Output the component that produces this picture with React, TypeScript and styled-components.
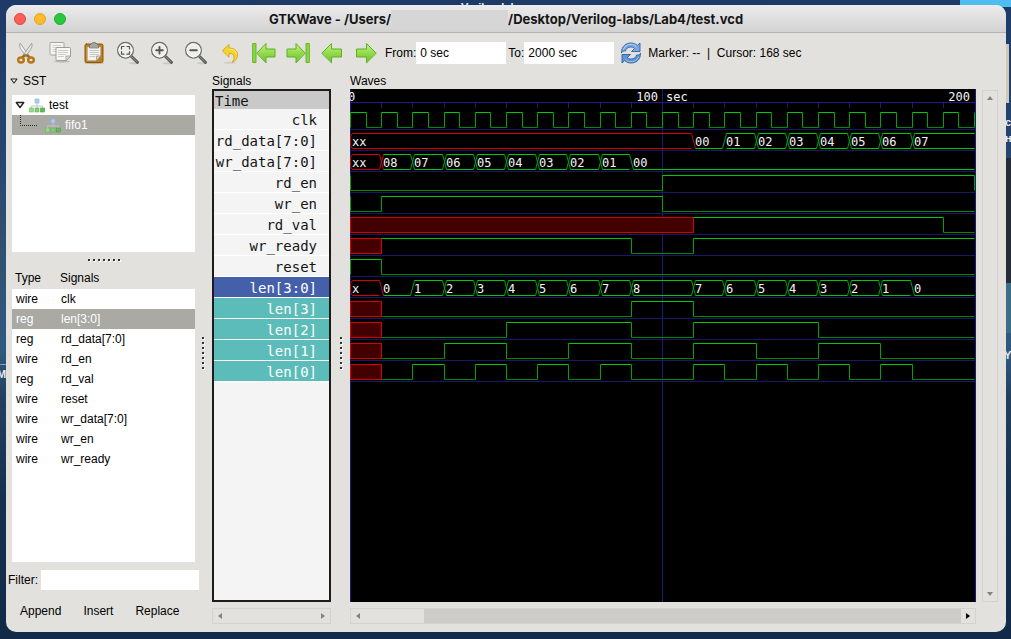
import React from "react";
import styled, { createGlobalStyle } from "styled-components";

const chrome = "#e2e1dd";
const selection = "#aaa9a4";
const ui = `"Liberation Sans", Arial, sans-serif`;
const mono = `"DejaVu Sans Mono", "Liberation Mono", monospace`;

const Global = createGlobalStyle`
  * { box-sizing: border-box; }
  html, body { margin: 0; padding: 0; }
  body { font: 12px/16px ${ui}; color: #000; }
  button, input { font: inherit; color: inherit; border: 0; padding: 0; margin: 0; background: none; }
`;

/* ---------- desktop ---------- */

const Desktop = styled.div`
  position: relative;
  display: flex;
  min-height: 100vh;
  padding: 5px 5px 7px 6px;
  overflow: hidden;
  background: linear-gradient(180deg, #1e3a66 0%, #24446f 22%, #31506f 38%, #2f5a80 55%, #23405f 62%, #16304f 78%, #122a47 100%);
`;

const Patch = styled.div<{ $x: string; $y: number; $w: number; $h: number; $c: string }>`
  position: absolute;
  ${(p) => p.$x};
  top: ${(p) => p.$y}px;
  width: ${(p) => p.$w}px;
  height: ${(p) => p.$h}px;
  background: ${(p) => p.$c};
`;

const DesktopLabel = styled.span<{ $x: string; $y: number }>`
  position: absolute;
  ${(p) => p.$x};
  top: ${(p) => p.$y}px;
  font-weight: bold;
  font-size: 11px;
  line-height: 12px;
  color: #e8eef6;
  white-space: nowrap;
`;

/* ---------- window ---------- */

const Window = styled.main`
  position: relative;
  z-index: 1;
  flex: 1;
  min-width: 0;
  display: flex;
  flex-direction: column;
  background: ${chrome};
  border-radius: 10px;
  overflow: hidden;
`;

const TitleBar = styled.header`
  position: relative;
  display: flex;
  align-items: center;
  justify-content: center;
  height: 28px;
  border-bottom: 1px solid #b4b3b1;
  background: linear-gradient(#ececec, #d3d2d2);
`;

const Lights = styled.div`
  position: absolute;
  left: 8px;
  top: 8px;
  display: flex;
  gap: 8px;
`;

const Light = styled.button<{ $c: string; $e: string }>`
  width: 12px;
  height: 12px;
  border-radius: 50%;
  background: ${(p) => p.$c};
  border: 1px solid ${(p) => p.$e};
`;

const Title = styled.h1`
  margin: 0;
  display: flex;
  align-items: center;
  font: 700 13px/18px Inter, sans-serif;
  color: #161616;
  white-space: pre;
`;

const Redacted = styled.span`
  width: 117px;
  height: 18px;
  background: #d6d6d6;
`;

const Toolbar = styled.div`
  display: flex;
  align-items: center;
  height: 40px;
  padding-left: 3px;
  white-space: pre;
`;

const ToolButton = styled.button`
  flex: none;
  display: flex;
  align-items: center;
  justify-content: center;
  width: 34px;
  height: 34px;
`;

const TimeLabel = styled.label`
  display: flex;
  align-items: center;
  padding-left: 2px;
`;

const TimeInput = styled.input`
  width: 90px;
  height: 22px;
  padding: 0 4px;
  background: #fff;
`;

const Body = styled.div`
  flex: 1;
  display: flex;
  min-height: 0;
`;

const Column = styled.section<{ $w?: number }>`
  display: flex;
  flex-direction: column;
  min-width: 0;
  ${(p) => (p.$w ? `flex: none; width: ${p.$w}px;` : "flex: 1;")}
`;

const Caption = styled.h2`
  margin: 0;
  height: 16px;
  font: 12px/16px ${ui};
`;

/* ---------- SST column ---------- */

const Expander = styled.button`
  display: flex;
  align-items: center;
  gap: 5px;
  height: 16px;
  margin: 0 0 6px 4px;
`;

const Tree = styled.ul`
  height: 157px;
  margin: 0 6px;
  padding: 0;
  list-style: none;
  background: #fff;
`;

const TreeItem = styled.li<{ $on?: boolean }>`
  display: flex;
  align-items: center;
  gap: 4px;
  height: 20px;
  padding-left: 3px;
  background: ${(p) => (p.$on ? selection : "transparent")};
  color: ${(p) => (p.$on ? "#fff" : "inherit")};
`;

const Grip = styled.div<{ $vertical?: boolean; $size: number; $start?: boolean }>`
  flex: none;
  display: flex;
  align-items: center;
  justify-content: ${(p) => (p.$start ? "flex-start" : "center")};
  ${(p) => (p.$vertical ? "width" : "height")}: ${(p) => p.$size}px;
`;

const ListBox = styled.div`
  flex: 1;
  margin: 0 6px 8px;
  background: #fff;
`;

const SignalTable = styled.table`
  width: 100%;
  border-collapse: collapse;
  table-layout: fixed;

  th, td {
    height: 20px;
    padding: 0 0 0 4px;
    font-weight: normal;
    text-align: left;
    vertical-align: middle;
  }
  th {
    height: 21px;
    padding: 0 0 2px 3px;
    background: ${chrome};
  }
  th:first-child { width: 45px; }
`;

const SignalRow = styled.tr<{ $on?: boolean }>`
  background: ${(p) => (p.$on ? selection : "transparent")};
  color: ${(p) => (p.$on ? "#fff" : "inherit")};
`;

const FilterRow = styled.label`
  display: flex;
  align-items: center;
  gap: 3px;
  height: 20px;
  padding: 0 2px;
`;

const FilterInput = styled.input`
  flex: 1;
  min-width: 0;
  height: 20px;
  padding: 0 4px;
  background: #fff;
`;

const Actions = styled.div`
  display: flex;
  height: 42px;
  padding-left: 3px;
`;

const Action = styled.button`
  padding: 0 11px;
`;

/* ---------- names and waves ---------- */

const Names = styled.ol`
  flex: 1;
  margin: 0;
  padding: 0;
  list-style: none;
  border: 2px solid #1c1c1c;
  background: #f4f4f4;
  font: 14px/23px ${mono};
  color: #141414;
`;

const tones = {
  plain: ["transparent", "inherit"],
  picked: ["#4560aa", "#fff"],
  child: ["#5cbcb9", "#fff"],
};

const Name = styled.li<{ $tone: keyof typeof tones }>`
  height: 21px;
  padding-right: 12px;
  border-bottom: 1px solid #fff;
  text-align: right;
  white-space: nowrap;
  background: ${(p) => tones[p.$tone][0]};
  color: ${(p) => tones[p.$tone][1]};
`;

const TimeHead = styled.li`
  height: 18px;
  padding-left: 1px;
  line-height: 20px;
  background: #c9c9c9;
`;

const WaveRow = styled.div`
  flex: 1;
  display: flex;
  gap: 6px;
  padding-right: 8px;
`;

const Screen = styled.div`
  flex: 1;
  min-width: 0;
  overflow: hidden;
  background: #000;
  border-right: 1px solid #1b1b80;
`;

const Drawing = styled.svg`
  display: block;
`;

const ScrollBar = styled.div<{ $vertical?: boolean; $end?: number }>`
  flex: none;
  display: flex;
  justify-content: space-between;
  flex-direction: ${(p) => (p.$vertical ? "column" : "row")};
  ${(p) => (p.$vertical ? "width: 16px; margin-top: 1px;" : `height: 16px; margin: 6px ${p.$end ?? 0}px 8px 0;`)}
  border: 1px solid #d3d2ce;
`;

const Arrow = styled.button`
  flex: none;
  display: flex;
  align-items: center;
  justify-content: center;
  width: 14px;
  height: 14px;
`;

const Thumb = styled.div`
  flex: none;
  width: 59px;
`;

const Trough = styled.div`
  flex: 1;
  background: #cdccc8;
`;

/* ---------- small drawings ---------- */

const Dots = ({ vertical }: { vertical?: boolean }) => (
  <svg width={vertical ? 4 : 34} height={vertical ? 34 : 4}>
    {Array.from({ length: 7 }, (_, i) => {
      const p = i * 5 + 1;
      const [x, y] = vertical ? [1, p] : [p, 1];
      return (
        <g key={i}>
          <rect x={x + 1} y={y + 1} width="2" height="2" fill="#fff" />
          <rect x={x} y={y} width="2" height="2" fill="#333" />
        </g>
      );
    })}
  </svg>
);

const arrowPaths = {
  up: "M1 6 4 2 7 6Z",
  down: "M1 2 4 6 7 2Z",
  left: "M6 1 2 4 6 7Z",
  right: "M2 1 6 4 2 7Z",
};

const ArrowButton = ({ dir, dark }: { dir: keyof typeof arrowPaths; dark?: boolean }) => (
  <Arrow aria-label={`Scroll ${dir}`}>
    <svg width="8" height="8">
      <path d={arrowPaths[dir]} fill={dark ? "#000" : "#83827e"} />
    </svg>
  </Arrow>
);

const Triangle = ({ size = 8 }: { size?: number }) => (
  <svg width={size} height={size} viewBox="0 0 8 8">
    <path d="M1 2h6L4 6Z" fill="#fff" stroke="#222" strokeWidth="1.1" strokeLinejoin="round" />
  </svg>
);

const ModuleIcon = () => (
  <svg width="16" height="15" viewBox="0 0 16 15">
    <path d="M8 4v4M2.500 11V8h11v3M8 8v3" fill="none" stroke="#c4c4c4" />
    <rect x="6" y="1" width="4" height="4" fill="#a9cdf3" stroke="#86b1e2" strokeWidth=".6" />
    <rect x=".5" y="10" width="4" height="4" fill="#9bd890" stroke="#6cb963" strokeWidth=".6" />
    <rect x="6" y="10" width="4" height="4" fill="#86cf7b" stroke="#5fb056" strokeWidth=".6" />
    <rect x="11.500" y="10" width="4" height="4" fill="#64b95b" stroke="#479c40" strokeWidth=".6" />
  </svg>
);

const Branch = () => (
  <svg width="26" height="20">
    <path d="M5.500 0V10.500H22" fill="none" stroke="#2a2a2a" strokeDasharray="1 1" />
  </svg>
);

const Icon = ({ children }: { children: React.ReactNode }) => (
  <svg width="24" height="24" viewBox="0 0 24 24" fill="none" strokeLinecap="round" strokeLinejoin="round">
    {children}
  </svg>
);

const CutIcon = () => (
  <Icon>
    <path d="M6 2.500c-.8 2 0 4.200 1.200 6L12.500 16l1.800-1.500Z" fill="#f4f4f2" stroke="#9a9a96" strokeWidth=".9" />
    <path d="M17.800 2.500c.8 2 0 4.200-1.200 6L11.300 16 9.500 14.500Z" fill="#e4e4e2" stroke="#9a9a96" strokeWidth=".9" />
    <path d="M10.500 14.500 8.500 16M13.300 14.500l2 1.500" stroke="#a5690c" strokeWidth="2.600" />
    <ellipse cx="7" cy="19" rx="2.800" ry="2.500" stroke="#b87514" strokeWidth="2.400" />
    <ellipse cx="17" cy="19" rx="2.800" ry="2.500" stroke="#b87514" strokeWidth="2.400" />
    <circle cx="12" cy="13.500" r=".8" fill="#777" />
  </Icon>
);

const CopyIcon = () => (
  <Icon>
    <ellipse cx="14" cy="20.500" rx="8" ry="1.200" fill="#bdbcb8" />
    <rect x="2" y="1.500" width="14" height="12.500" rx="1" fill="#f5f5f3" stroke="#a4a4a0" />
    <path d="M5 4.500h8M5 6.500h3M5 8.500h3M5 10.500h3" stroke="#cfcfcb" />
    <path d="M9 6.500h12.500a1 1 0 0 1 1 1V15l-4.500 4.500H9a1 1 0 0 1-1-1v-11a1 1 0 0 1 1-1Z" fill="#f7f7f5" stroke="#9c9c98" />
    <path d="M10.500 9.500h9M10.500 11.500h9M10.500 13.500h7M10.500 15.500h5" stroke="#cbcbc7" />
    <path d="M22.500 15H18v4.500Z" fill="#dcdcd8" stroke="#9c9c98" strokeWidth=".8" />
  </Icon>
);

const PasteIcon = () => (
  <Icon>
    <ellipse cx="12" cy="22" rx="10" ry="1.200" fill="#b9b8b3" />
    <rect x="3" y="3" width="18" height="18.500" rx="1.500" fill="#c17d11" stroke="#8f5902" />
    <path d="M5.500 6h13v9l-4 4.500h-9Z" fill="#f2f2f0" stroke="#b9b7b2" strokeWidth=".7" />
    <path d="M8 9.500h8.500M8 11.500h8.500M8 13.500h8M8 15.500h5" stroke="#c3c3bf" strokeWidth=".9" />
    <path d="M18.500 15h-4v4.500Z" fill="#d3d3cf" stroke="#8e8e8a" strokeWidth=".7" />
    <path d="M7.500 6.500V4.500Q7.500 3.500 9 3.300 9.500 1.500 12 1.500t3 1.800q1.500.2 1.500 1.200v2Z" fill="#a5a6a0" stroke="#6c6d69" strokeWidth=".8" />
  </Icon>
);

const Magnifier = ({ children }: { children: React.ReactNode }) => (
  <Icon>
    <ellipse cx="18" cy="22.300" rx="5" ry="1" fill="#c9c8c4" />
    <path d="M15.500 15.500 21.500 21.300" stroke="#5a5c58" strokeWidth="3" />
    <path d="M15.500 15.500 21 20.800" stroke="#8c8e89" strokeWidth="1" />
    <circle cx="9.500" cy="9.300" r="7.800" fill="#eeeeec" stroke="#6f716d" strokeWidth="1.400" />
    <circle cx="9.500" cy="9.300" r="6.600" stroke="#fff" strokeWidth=".8" />
    {children}
  </Icon>
);

const UndoIcon = () => (
  <Icon>
    <ellipse cx="12" cy="21.800" rx="6" ry="1" fill="#cfcdc4" />
    <path
      d="M4.500 9.500 11 3.500V7c6 .3 8.500 3 8.500 7 0 3.500-2 6-5.500 7.200 1.700-2 2.300-3.800 2-5.500-.3-2.200-1.800-3.300-5-3.400v3.500Z"
      fill="#f6d32d"
      stroke="#d3a514"
      strokeWidth=".9"
    />
    <path d="M11.700 8.300c4.500.1 6.600 2 6.800 5" stroke="#fdf0a0" strokeWidth=".9" />
  </Icon>
);

const GreenArrow = ({ flip, stop }: { flip?: boolean; stop?: boolean }) => (
  <Icon>
    <g transform={flip ? "matrix(-1 0 0 1 24 0)" : undefined}>
      <defs>
        <linearGradient id="leaf" x1="0" y1="0" x2="0" y2="1">
          <stop offset="0" stopColor="#c2f08a" />
          <stop offset=".5" stopColor="#93dc4c" />
          <stop offset="1" stopColor="#6cc02a" />
        </linearGradient>
      </defs>
      {stop && <rect x="1" y="2.500" width="3" height="19" fill="#8ad646" stroke="#5fb020" strokeWidth=".9" />}
      <path
        d={
          stop
            ? "M5 12 14 2.500V8H23V16H14V21.500Z"
            : "M2 12 11.500 2.500V8H21.500V16H11.500V21.500Z"
        }
        fill="url(#leaf)"
        stroke="#5fb020"
      />
    </g>
  </Icon>
);

const ReloadIcon = () => (
  <Icon>
    <path
      d="M2.500 11.500C2.500 5 7 2 12 2c2.700 0 4.800 1 6.300 2.500L21 2v8.500h-8.500l3-3C14.500 6.300 13.300 6 12 6c-3 0-5 1.500-5.500 4-1.500-.3-3 .2-4 1.500Z"
      fill="#7ba7dc"
      stroke="#2f62a5"
      strokeWidth=".9"
    />
    <path d="M4.500 8.500C6 4.500 9 3.300 12 3.300c2.300 0 4 .8 5.300 2.200" stroke="#bcd5f3" strokeWidth=".9" />
    <path
      d="M21.500 12.500C21.500 19 17 22 12 22c-2.700 0-4.800-1-6.300-2.500L3 22v-8.500h8.500l-3 3c1 1.200 2.200 1.500 3.500 1.500 3 0 5-1.500 5.500-4 1.500.3 3-.2 4-1.500Z"
      fill="#5f92cf"
      stroke="#2f62a5"
      strokeWidth=".9"
    />
    <path d="M19.500 16c-1.500 3.600-4.500 4.700-7.500 4.700-2.300 0-4-.8-5.300-2.200" stroke="#a5c6ee" strokeWidth=".9" />
  </Icon>
);

const tools: [string, React.ReactNode][] = [
  ["Cut", <CutIcon />],
  ["Copy", <CopyIcon />],
  ["Paste", <PasteIcon />],
  [
    "Zoom fit",
    <Magnifier>
      <path d="M5.500 8V5.500H8M11 5.500h2.500V8M13.500 10.700v2.500H11M8 13.200H5.500v-2.500" stroke="#555753" strokeWidth="1.200" />
    </Magnifier>,
  ],
  [
    "Zoom in",
    <Magnifier>
      <path d="M9.500 6v6.600M6.200 9.300h6.600" stroke="#555753" strokeWidth="1.900" />
    </Magnifier>,
  ],
  [
    "Zoom out",
    <Magnifier>
      <path d="M6.200 9.300h6.600" stroke="#555753" strokeWidth="1.900" />
    </Magnifier>,
  ],
  ["Zoom undo", <UndoIcon />],
  ["Zoom to start", <GreenArrow stop />],
  ["Zoom to end", <GreenArrow stop flip />],
  ["Previous edge", <GreenArrow />],
  ["Next edge", <GreenArrow flip />],
];

/* ---------- trace data (one unit is ten seconds) ---------- */

type Step = [number, string];
type Trace = { name: string; tone?: keyof typeof tones; bus?: boolean; steps: Step[] };

const END = 20;

const clock: Step[] = Array.from({ length: END * 2 + 1 }, (_, i) => [i / 2, i % 2 ? "0" : "1"]);

const lenSteps: Step[] = [
  [0, "x"], [1, "0"], [2, "1"], [3, "2"], [4, "3"], [5, "4"], [6, "5"], [7, "6"], [8, "7"], [9, "8"],
  [11, "7"], [12, "6"], [13, "5"], [14, "4"], [15, "3"], [16, "2"], [17, "1"], [18, "0"],
];

const bit = (n: number): Step[] =>
  lenSteps
    .map(([t, v]): Step => [t, v === "x" ? "x" : String((Number(v) >> n) & 1)])
    .filter(([, v], i, all) => i === 0 || all[i - 1][1] !== v);

const traces: Trace[] = [
  { name: "clk", steps: clock },
  {
    name: "rd_data[7:0]",
    bus: true,
    steps: [[0, "xx"], [11, "00"], [12, "01"], [13, "02"], [14, "03"], [15, "04"], [16, "05"], [17, "06"], [18, "07"]],
  },
  {
    name: "wr_data[7:0]",
    bus: true,
    steps: [[0, "xx"], [1, "08"], [2, "07"], [3, "06"], [4, "05"], [5, "04"], [6, "03"], [7, "02"], [8, "01"], [9, "00"]],
  },
  { name: "rd_en", steps: [[0, "0"], [10, "1"], [20, "0"]] },
  { name: "wr_en", steps: [[0, "0"], [1, "1"], [10, "0"]] },
  { name: "rd_val", steps: [[0, "x"], [11, "1"], [19, "0"]] },
  { name: "wr_ready", steps: [[0, "x"], [1, "1"], [9, "0"], [11, "1"]] },
  { name: "reset", steps: [[0, "1"], [1, "0"]] },
  { name: "len[3:0]", tone: "picked", bus: true, steps: lenSteps },
  { name: "len[3]", tone: "child", steps: bit(3) },
  { name: "len[2]", tone: "child", steps: bit(2) },
  { name: "len[1]", tone: "child", steps: bit(1) },
  { name: "len[0]", tone: "child", steps: bit(0) },
];

const px = (t: number) => Math.round(t * 31.2) + 0.5;
const HIGH = "#00c800";
const LOW = "#008a00";
const EDGE = "#00a400";
const RED = "#d40000";
const GRID = "#1c1c7c";

const isX = (v: string) => v.startsWith("x");

const Wire = ({ steps, top, bottom }: { steps: Step[]; top: number; bottom: number }) => (
  <>
    {steps.map(([t, v], i) => {
      const a = px(t);
      const b = px(i + 1 < steps.length ? steps[i + 1][0] : END);
      if (v === "x")
        return <rect key={i} x={a} y={top} width={b - a} height={bottom - top} fill="#430000" stroke={RED} />;
      const y = v === "1" ? top : bottom;
      const afterX = i > 0 && steps[i - 1][1] === "x";
      return (
        <g key={i}>
          {!afterX && <path d={`M${a} ${top}V${bottom}`} stroke={EDGE} />}
          {b > a && <path d={`M${a} ${y}H${b}`} stroke={v === "1" ? HIGH : LOW} />}
        </g>
      );
    })}
  </>
);

const Bus = ({ steps, top, bottom }: { steps: Step[]; top: number; bottom: number }) => (
  <>
    {steps.map(([t, v], i) => {
      const last = i + 1 === steps.length;
      const a = px(t) + 2;
      const b = px(last ? END : steps[i + 1][0]) - (last ? 0 : 2);
      const zero = Number(v) === 0;
      const color = isX(v) ? RED : HIGH;
      const next = last ? "" : steps[i + 1][1];
      const nextTop = Number(next) === 0 ? bottom : top;
      return (
        <g key={i}>
          <path d={`M${a} ${bottom}H${b}${zero ? "" : `M${a} ${top}H${b}`}`} stroke={color} />
          {i === 0 && <path d={`M${a} ${top}L${a - 2} ${top + 3}V${bottom - 3}L${a} ${bottom}`} stroke={color} />}
          {!last && (
            <g stroke={isX(v) ? RED : EDGE}>
              {!zero && <path d={`M${b} ${top}L${b + 4} ${bottom}`} />}
              {nextTop === top && <path d={`M${b} ${bottom}L${b + 4} ${top}`} />}
            </g>
          )}
          <text x={Math.round(px(t)) + 1} y={Math.floor(bottom) - 2} fill="#f4f4f4">
            {v}
          </text>
        </g>
      );
    })}
  </>
);

const Waves = () => (
  <Drawing width="625" height="513" fill="none" fontFamily={mono} fontSize="12" role="img" aria-label="Waveforms">
    <path d={`M0 13.500H625`} stroke={GRID} />
    {Array.from({ length: END }, (_, i) => (
      <path key={i} d={`M${px(i)} 13V19`} stroke={GRID} />
    ))}
    {traces.map((_, i) => (
      <path key={i} d={`M0 ${40.5 + i * 21}H625`} stroke="#18186a" />
    ))}
    <path d={`M.5 0V513M${px(10)} 0V513`} stroke={GRID} />
    <text x="-2" y="12" fill="#f4f4f4">0</text>
    <text x="308" y="12" textAnchor="end" fill="#f4f4f4">100</text>
    <text x="316" y="12" fill="#f4f4f4">sec</text>
    <text x="620" y="12" textAnchor="end" fill="#f4f4f4">200</text>
    {traces.map((t, i) => {
      const Shape = t.bus ? Bus : Wire;
      return <Shape key={t.name} steps={t.steps} top={23.5 + i * 21} bottom={38.5 + i * 21} />;
    })}
  </Drawing>
);

const signals: [string, string][] = [
  ["wire", "clk"],
  ["reg", "len[3:0]"],
  ["reg", "rd_data[7:0]"],
  ["wire", "rd_en"],
  ["reg", "rd_val"],
  ["wire", "reset"],
  ["wire", "wr_data[7:0]"],
  ["wire", "wr_en"],
  ["wire", "wr_ready"],
];

export default function App() {
  return (
    <Desktop>
      <Global />
      <Patch $x="right: 0" $y={0} $w={51} $h={7} $c="#4fbdf0" />
      <Patch $x="right: 2px" $y={44} $w={4} $h={59} $c="#cfc9ba" />
      <Patch $x="right: 0" $y={158} $w={6} $h={125} $c="#262b38" />
      <Patch $x="right: 0" $y={283} $w={6} $h={50} $c="#3b6d86" />
      <DesktopLabel $x="left: 461px" $y={1}>Verilog-labs</DesktopLabel>
      <DesktopLabel $x="left: 1005px" $y={116}>c</DesktopLabel>
      <DesktopLabel $x="left: 1005px" $y={132}>н</DesktopLabel>
      <DesktopLabel $x="left: 1004px" $y={349}>Y</DesktopLabel>
      <DesktopLabel $x="left: 0" $y={353}>_</DesktopLabel>
      <DesktopLabel $x="left: -3px" $y={368}>M</DesktopLabel>

      <Window>
        <TitleBar>
          <Lights>
            <Light $c="#fe5f57" $e="#e2463f" aria-label="Close" />
            <Light $c="#febb2e" $e="#e0a023" aria-label="Minimize" />
            <Light $c="#28c840" $e="#1dad2b" aria-label="Zoom" />
          </Lights>
          <Title>
            GTKWave - /Users/
            <Redacted />
            /Desktop/Verilog-labs/Lab4/test.vcd
          </Title>
        </TitleBar>

        <Toolbar>
          {tools.map(([label, icon]) => (
            <ToolButton key={label} aria-label={label}>
              {icon}
            </ToolButton>
          ))}
          <TimeLabel>
            From:
            <TimeInput defaultValue="0 sec" />
          </TimeLabel>
          <TimeLabel>
            To:
            <TimeInput defaultValue="2000 sec" />
          </TimeLabel>
          <ToolButton aria-label="Reload">
            <ReloadIcon />
          </ToolButton>
          <span>{"Marker: --  |  Cursor: 168 sec"}</span>
        </Toolbar>

        <Body>
          <Column $w={195}>
            <Expander>
              <Triangle />
              SST
            </Expander>
            <Tree>
              <TreeItem>
                <Triangle size={10} />
                <ModuleIcon />
                test
              </TreeItem>
              <TreeItem $on>
                <Branch />
                <ModuleIcon />
                fifo1
              </TreeItem>
            </Tree>
            <Grip $size={16}>
              <Dots />
            </Grip>
            <ListBox>
              <SignalTable>
                <thead>
                  <tr>
                    <th>Type</th>
                    <th>Signals</th>
                  </tr>
                </thead>
                <tbody>
                  {signals.map(([type, name]) => (
                    <SignalRow key={name} $on={name === "len[3:0]"}>
                      <td>{type}</td>
                      <td>{name}</td>
                    </SignalRow>
                  ))}
                </tbody>
              </SignalTable>
            </ListBox>
            <FilterRow>
              Filter:
              <FilterInput />
            </FilterRow>
            <Actions>
              <Action>Append</Action>
              <Action>Insert</Action>
              <Action>Replace</Action>
            </Actions>
          </Column>

          <Grip $vertical $size={11} $start>
            <Dots vertical />
          </Grip>

          <Column $w={119}>
            <Caption>Signals</Caption>
            <Names>
              <TimeHead>Time</TimeHead>
              {traces.map((t) => (
                <Name key={t.name} $tone={t.tone ?? "plain"}>
                  {t.name}
                </Name>
              ))}
            </Names>
            <ScrollBar>
              <ArrowButton dir="left" />
              <ArrowButton dir="right" />
            </ScrollBar>
          </Column>

          <Grip $vertical $size={19}>
            <Dots vertical />
          </Grip>

          <Column>
            <Caption>Waves</Caption>
            <WaveRow>
              <Screen>
                <Waves />
              </Screen>
              <ScrollBar $vertical>
                <ArrowButton dir="up" />
                <ArrowButton dir="down" />
              </ScrollBar>
            </WaveRow>
            <ScrollBar $end={30}>
              <ArrowButton dir="left" />
              <Thumb />
              <Trough />
              <ArrowButton dir="right" dark />
            </ScrollBar>
          </Column>
        </Body>
      </Window>
    </Desktop>
  );
}
